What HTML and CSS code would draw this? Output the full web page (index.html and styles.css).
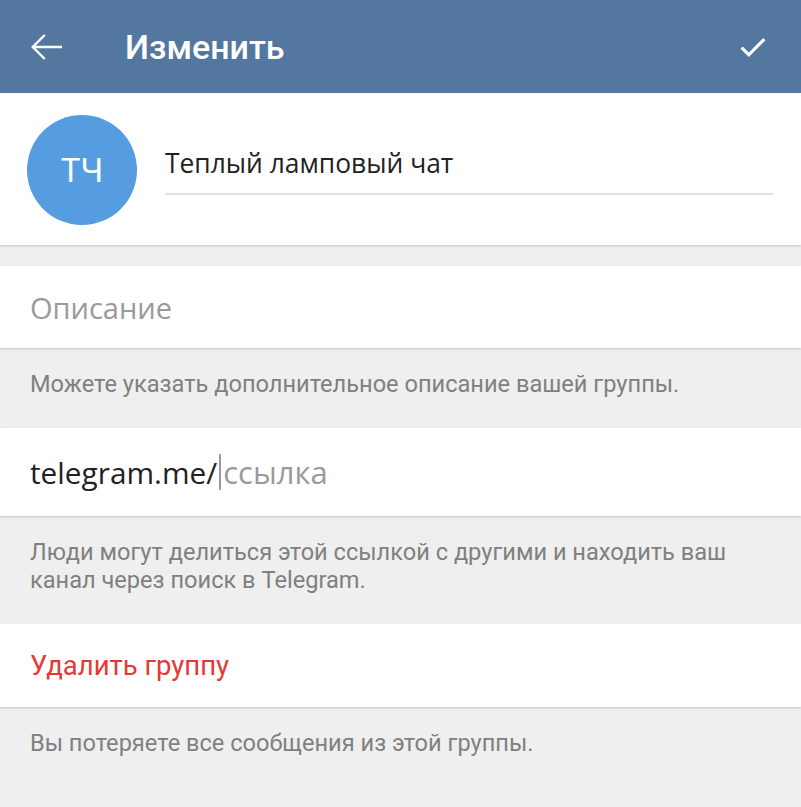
FILE: index.html
```html
<!DOCTYPE html>
<html lang="ru">
<head>
    <meta charset="utf-8" />
    <link rel="stylesheet" href="styles.css">
</head>
<body>
    <div class="header">
        <svg class="header-icon" width="36" height="36" viewBox="0 0 24 24">
            <path d="M22 12H2.5M10.5 4L2.5 12l8 8" fill="none" stroke="#fff" stroke-width="1.6" />
        </svg>
        <div class="header-title">Изменить</div>
        <svg class="header-icon header-done" width="34" height="34" viewBox="0 0 24 24">
            <path d="M4 12.5l5 5L20 6.5" fill="none" stroke="#fff" stroke-width="2.2" />
        </svg>
    </div>

    <div class="card card-top">
        <div class="avatar">ТЧ</div>
        <div class="name-field">Теплый ламповый чат</div>
    </div>

    <div class="card card-field">
        <div class="placeholder">Описание</div>
    </div>
    <div class="hint">Можете указать дополнительное описание вашей группы.</div>

    <div class="card card-field card-link">
        <div class="link-text">telegram.me/<span class="caret"></span><span class="placeholder">ссылка</span></div>
    </div>
    <div class="hint">Люди могут делиться этой ссылкой с другими и находить ваш канал через поиск в Telegram.</div>

    <div class="card card-field card-danger">
        <div class="danger">Удалить группу</div>
    </div>
    <div class="hint">Вы потеряете все сообщения из этой группы.</div>
</body>
</html>
```

FILE: styles.css
```css
body {
    margin: 0;
    background: #efefef;
    font-family: Roboto, "Noto Sans", sans-serif;
}

.header {
    display: flex;
    align-items: center;
    height: 93px;
    padding: 0 32px 0 29px;
    background: #5477a0;
    color: #fff;
}

.header-title {
    margin-left: 60px;
    font-size: 34px;
    font-weight: 500;
    flex: 1;
}

.header-done {
    margin-right: -1px;
}

.card {
    background: #fff;
    box-shadow: 0 1px 2px rgba(0, 0, 0, 0.18);
}

.card-top {
    display: flex;
    align-items: center;
    height: 152px;
    padding: 0 28px 0 27px;
    margin-bottom: 21px;
}

.avatar {
    width: 110px;
    height: 110px;
    border-radius: 50%;
    background: #559ce0;
    color: #fff;
    font-size: 33px;
    display: flex;
    align-items: center;
    justify-content: center;
    flex-shrink: 0;
    margin-top: 2px;
}

.name-field {
    flex: 1;
    margin-left: 28px;
    margin-top: 2px;
    padding-bottom: 12px;
    border-bottom: 2px solid #e2e2e2;
    font-family: "Open Sans", sans-serif;
    font-size: 26.4px;
    color: #222;
}

.card-field {
    display: flex;
    align-items: center;
    height: 82px;
    padding: 0 30px;
}

.card-link {
    height: 88px;
}

.card-danger {
    height: 83px;
}

.placeholder {
    font-family: "Open Sans", sans-serif;
    font-size: 29px;
    color: #9a9a9a;
}

.link-text {
    display: flex;
    align-items: center;
    font-family: "Open Sans", sans-serif;
    font-size: 29.8px;
    color: #222;
}

.link-text .placeholder {
    font-size: 31px;
    margin-left: 2px;
}

.caret {
    width: 2px;
    height: 36px;
    margin-left: 2px;
    background: #999;
}

.hint {
    padding: 22px 30px 30px;
    font-size: 23.6px;
    line-height: 28px;
    color: #808080;
}

.danger {
    font-size: 27.5px;
    color: #e53935;
}
```
